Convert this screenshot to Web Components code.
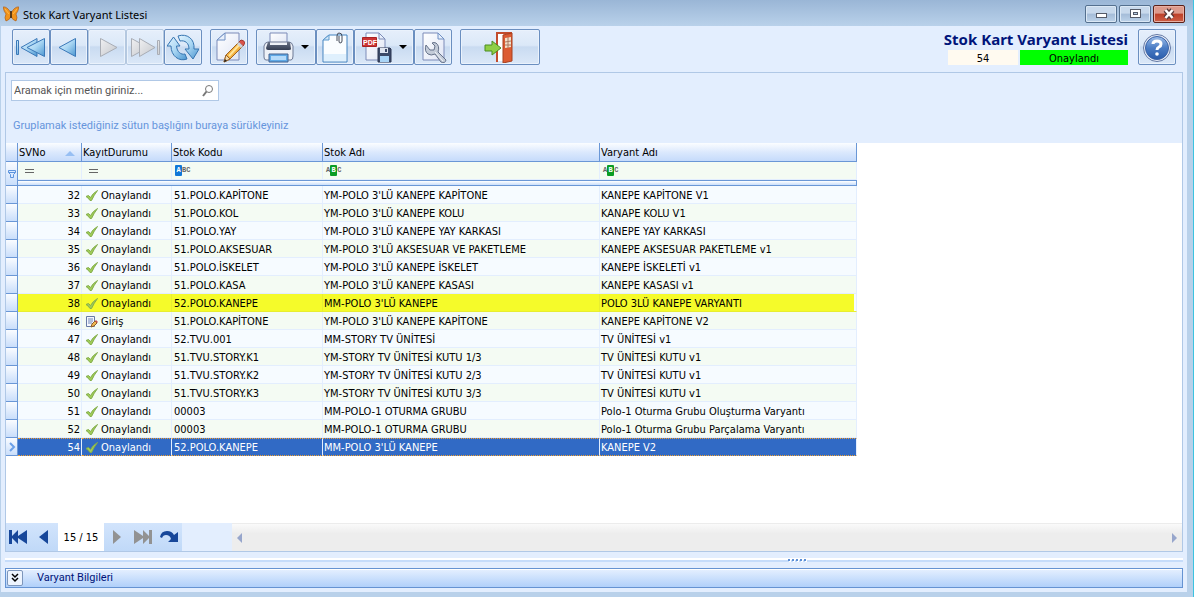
<!DOCTYPE html>
<html lang="tr">
<head>
<meta charset="utf-8">
<title>Stok Kart Varyant Listesi</title>
<style>
html,body{margin:0;height:100%}
body{font:11px/16px "DejaVu Sans Condensed","Noto Sans",sans-serif;color:#000;background:#b9d1ea;--soft:"Noto Sans","Open Sans",sans-serif;--slim:Roboto,"Liberation Sans",sans-serif}
</style>
</head>
<body>
<app-window caption="Stok Kart Varyant Listesi">
  <tool-bar slot="toolbar">
    <tool-button icon="first" label="İlk kayıt"></tool-button>
    <tool-button icon="prev" label="Önceki kayıt"></tool-button>
    <tool-button icon="next" label="Sonraki kayıt" disabled></tool-button>
    <tool-button icon="last" label="Son kayıt" disabled></tool-button>
    <tool-button icon="refresh" label="Yenile"></tool-button>
    <tool-button class="gap" icon="edit" label="Düzenle"></tool-button>
    <tool-button class="gap" icon="print" label="Yazdır" menu></tool-button>
    <tool-button icon="clip" label="Ekler"></tool-button>
    <tool-button icon="pdf" label="PDF olarak kaydet" menu></tool-button>
    <tool-button icon="wrench" label="Ayarlar"></tool-button>
    <tool-button class="gap" icon="exit" label="Çıkış" wide></tool-button>
    <record-status slot="end" heading="Stok Kart Varyant Listesi" number="54" state="Onaylandı"></record-status>
    <tool-button slot="end" icon="help" label="Yardım"></tool-button>
  </tool-bar>
  <list-panel>
    <search-box slot="search" hint="Aramak için metin giriniz..."></search-box>
    <span slot="group">Gruplamak istediğiniz sütun başlığını buraya sürükleyiniz</span>
    <variant-grid></variant-grid>
    <record-navigator slot="footer" position="15 / 15"></record-navigator>
  </list-panel>
  <split-bar></split-bar>
  <fold-panel>Varyant Bilgileri</fold-panel>
</app-window>
<script>
const gradients = `<defs>
<linearGradient id="b" x1="0" y1="0" x2="1" y2="1"><stop offset="0" stop-color="#e4f5ff"/><stop offset=".5" stop-color="#a9d6f3"/><stop offset="1" stop-color="#4a95d0"/></linearGradient>
<linearGradient id="g" x1="0" y1="0" x2="1" y2="1"><stop offset="0" stop-color="#f0f0f2"/><stop offset="1" stop-color="#c4c7cc"/></linearGradient>
<linearGradient id="p" x1="0" y1="0" x2="1" y2="1"><stop offset="0" stop-color="#fff"/><stop offset="1" stop-color="#dfe5f5"/></linearGradient>
<linearGradient id="d" x1="0" y1="0" x2="0" y2="1"><stop offset="0" stop-color="#6a7387"/><stop offset="1" stop-color="#343d52"/></linearGradient>
<linearGradient id="q" x1="0" y1="0" x2="0" y2="1"><stop offset="0" stop-color="#9fbfea"/><stop offset=".5" stop-color="#4a7cc4"/><stop offset="1" stop-color="#2a5cab"/></linearGradient>
</defs>`;
const page = `<path d="M12 2H26V29H4V9Z" fill="url(#p)" stroke="#7c8bb8"/><path d="M12 2V9H4Z" fill="#e8effa" stroke="#6f8fc4"/>`;
const pageR = `<path d="M6 2H21L27 8V29H6Z" fill="url(#p)" stroke="#7c8bb8"/><path d="M21 2V8H27Z" fill="#e8effa" stroke="#6f8fc4"/>`;
const icons = {
  first:[32,`<g stroke="#3a78b8" stroke-linejoin="round" fill="url(#b)"><path d="M1.500 9.500h2v14h-2z"/><path d="M22 7.500V25.500L6 16.500Z"/><path d="M29.500 7.500V25.500L12 16.500Z"/></g>`],
  prev:[32,`<path d="M22.500 7.500V25.500L6 16.500Z" fill="url(#b)" stroke="#3a78b8" stroke-linejoin="round"/>`],
  next:[32,`<path d="M9.500 7.500V25.500L26 16.500Z" fill="url(#g)" stroke="#a9adb5" stroke-linejoin="round"/>`],
  last:[32,`<g stroke="#a9adb5" stroke-linejoin="round" fill="url(#g)"><path d="M2.500 7.500V25.500L19 16.500Z"/><path d="M10.500 7.500V25.500L26 16.500Z"/><path d="M28.500 9.500h2v14h-2z"/></g>`],
  refresh:[32,`<g fill="url(#b)" stroke="#3574b0" stroke-linejoin="round"><path d="M0 15L6.500 6L13 15H9.500C10 21 14 24 18 23L20 28C12 31 4 25 4 15Z"/><path d="M32 18L26 28L18 18H22C22 12 18 9 13 10L11 5C20 2 28 8 27 18Z"/></g>`],
  edit:[32,`${page}<path d="M11 31L13 24L27 10L31 14L17 28Z" fill="#f3b13f" stroke="#9c6226"/><path d="M16 25L27 13" stroke="#ffe49a" stroke-width="2"/><path d="M26 11L28 9Q31 9 32 12L30 15Z" fill="#d9534a" stroke="#a23a34"/><path d="M24 13L26 11L30 15L28 17Z" fill="#cdd3dd"/><path d="M11 31L13 24L17 28Z" fill="#f3dcae" stroke="#9c6226"/><path d="M11 31L12 28L14 30Z" fill="#222"/>`],
  print:[32,`<path d="M8 14V2H25V14" fill="url(#p)" stroke="#7c8bb8"/><path d="M2 15Q3 11 6 11H27Q30 11 31 15V25Q31 29 29 29H4Q2 29 2 26Z" fill="#eef1f7" stroke="#6c7894"/><path d="M6 11H8V14H25V11H28L29 18Q29 19 27 19H6Q4 19 4 17Z" fill="url(#d)"/><path d="M7 23H26V31H7Z" fill="#5fa9e6" stroke="#47628f"/><path d="M9 25H24V29H9Z" fill="#b4dafa"/>`],
  clip:[32,`<path d="M10 4H28V31H4V9Z" fill="#fafdff" stroke="#4383c0"/><path d="M5 23H27V30H5Z" fill="#dff0fd"/><path d="M10 4V9H4Z" fill="#cfe5f8" stroke="#5d99cd"/><path d="M18 10V5Q18 2 20 2Q23 2 23 5V10Q23 12 21 12Q20 12 20 10V5" fill="none" stroke="#444a58"/>`],
  pdf:[32,`<path d="M6 2H19L25 8V29H6Z" fill="url(#p)" stroke="#7c8bb8"/><path d="M19 2V8H25Z" fill="#e8effa" stroke="#7c8bb8"/><path d="M2.500 6.500H16.500V15.500H2.500Z" fill="#cc3434" stroke="#a82222"/><text x="3" y="14" font-family="Liberation Sans" font-size="7" font-weight="bold" fill="#fff">PDF</text><path d="M18 17H30L31 18V31H18Z" fill="#3c4a68" stroke="#2a3550"/><path d="M20 17H28V22H20Z" fill="#dfe5f0"/><path d="M25 18H27V21H25Z" fill="#3c4a68"/><path d="M20 25H29V31H20Z" fill="#a9d4f6"/>`],
  wrench:[32,`${pageR}<path d="M9 14Q7 20 11 23Q14 25 18 23L24 31Q28 33 29 29L21 21Q23 15 19 12Q17 11 15 12L18 15L17 19L13 19Z" fill="#c3cbd8" stroke="#66728a" stroke-linejoin="round"/><path d="M18 21L26 30" stroke="#eef2f7"/>`],
  exit:[32,`<path d="M13 31V2H28" fill="none" stroke="#c24c2c" stroke-width="2"/><path d="M14 3H20V30H14Z" fill="#fff"/><path d="M19 4L28 2V30L19 32Z" fill="#dc5b32" stroke="#a8401f"/><path d="M21 7L27 6V16L21 17Z" fill="#f4dfc8"/><path d="M24 6V17M21 11L27 10M21 14H27" stroke="#a87860"/><path d="M1 14H8V10L17 17L8 24V20H1Z" fill="#8fce45" stroke="#4b8d21" stroke-linejoin="round"/>`],
  help:[32,`<circle cx="16" cy="17" r="13.500" fill="#e9eef8" stroke="#6378a3"/><circle cx="16" cy="17" r="11.500" fill="url(#q)" stroke="#3a62a6"/><path d="M12 13Q12 10 16 10Q20 10 20 13Q20 15 18 16Q16 17 16 19" fill="none" stroke="#fff" stroke-width="3"/><circle cx="16" cy="23" r="1.800" fill="#fff"/>`],
  check:[14,`<path d="M1 7.500L3.500 6.500L5.500 8.500Q8 4 12.500 1.500Q9 6 6.500 11.500H5Q3.500 9 1 7.500Z" fill="#9fcb57" stroke="#84ae4c" stroke-width="1"/>`],
  note:[14,`<path d="M1.500 1.500H9.500V11.500H1.500Z" fill="#f4f7fd" stroke="#6679a6"/><path d="M3 4H8M3 6H8M3 8H7" stroke="#6f86b8"/><path d="M6 12L7 9L10 6L12 8L9 11Z" fill="#f0b850" stroke="#8f5f2a"/><path d="M10 6L11 5L13 7L12 8Z" fill="#c9524a"/>`],
  funnel:[10,`<path d="M1.500 1.500H8.500V3.500L6.500 5.500V8.500H3.500V5.500L1.500 3.500ZM1.500 3.500H8.500" fill="#dcebff" stroke="#5e95dd"/>`],
  search:[14,`<circle cx="8" cy="5" r="3.500" fill="#fff" stroke="#777"/><path d="M5.500 7.500L2 12" stroke="#777" stroke-width="2"/>`],
  logo:[16,`<path d="M8 7Q4 0 0 1Q1 6 3 8Q1 12 3 15Q7 14 8 10Q9 14 13 15Q15 12 13 8Q15 6 16 1Q12 0 8 7Z" fill="#f0931c" stroke="#a85410" stroke-width=".6"/><path d="M8 5V12" stroke="#33200f" stroke-width="1.500"/><path d="M2 3L6 8M14 3L10 8" stroke="#ffb84a"/>`],
  nfirst:[20,`<path d="M1 3H4V9L10 3V9L19 3V17L10 11V17L4 11V17H1Z" fill="#17479a"/>`],
  nprev:[20,`<path d="M14 3V17L5 10Z" fill="#17479a"/>`],
  nnext:[20,`<path d="M6 3V17L14 10Z" fill="#929292"/>`],
  nlast:[20,`<path d="M19 3H16V9L10 3V9L1 3V17L10 11V17L16 11V17H19Z" fill="#929292"/>`],
  nredo:[20,`<path d="M1 10Q2 4 8 4Q13 4 15 8L19 5V15H9L12 12Q11 8 7 8Q4 8 3 11Z" fill="#17479a"/>`],
  chev:[10,`<path d="M2 1L5 4L8 1M2 5L5 8L8 5" fill="none" stroke="#000" stroke-width="1.500"/>`],
  row:[10,`<path d="M3 1L7 5L3 9" fill="none" stroke="#6ba0e8" stroke-width="2"/>`]
};
const svg = (name, size) => {
  const [box, body] = icons[name];
  return `<svg viewBox="0 0 ${box} ${box}" width="${size||box}" height="${size||box}" aria-hidden="true">${gradients}${body}</svg>`;
};
class Base extends HTMLElement{
  constructor(){super();this.attachShadow({mode:'open'});}
  connectedCallback(){this.shadowRoot.innerHTML=`<style>*{box-sizing:border-box}button{font:inherit;color:inherit;margin:0}svg{display:block;flex:none}${this.css()}</style>${this.html()}`;}
  at(n){return this.getAttribute(n)||'';}
}
customElements.define('app-window', class extends Base{
  css(){return `
  :host{display:flex;flex-direction:column;min-height:100vh;box-sizing:border-box;padding:0 6px 5px 1px;background:#b9d1ea;border-right:1px solid #3cc3e0}
  header{display:flex;align-items:center;height:26px;margin:0 -6px 0 -1px;padding:0 8px 0 3px;background:linear-gradient(#9ab6d6,#b9d1ea);font:11px/16px var(--soft)}
  h1{margin:4px auto 0 4px;font:inherit}
  svg{margin-top:2px}
  .box{display:flex;gap:2px;margin-top:2px}
  .box button{display:grid;place-items:center;width:32px;height:18px;padding:0;border:1px solid #54708f;border-radius:2px;background:linear-gradient(#c8d9ec 45%,#a4bcd8 50%,#bdd3ea);box-shadow:inset 0 0 0 1px #dbe8f5}
  .box svg{margin:0}
  .box .x{border-color:#5b2018;background:linear-gradient(#dd9a8c 45%,#bd4029 50%,#cf5f46);box-shadow:inset 0 0 0 1px #e8b0a4}
  main{flex:1;display:flex;flex-direction:column;background:#e3eefe;padding:2px 4px 4px}`;}
  html(){return `<header>${svg('logo')}<h1>${this.at('caption')}</h1><div class="box">
  <button aria-label="Simge durumuna küçült"><svg width="16" height="12"><rect x="3.500" y="5.500" width="10" height="4" fill="#fff" stroke="#555b68"/></svg></button>
  <button aria-label="Ekranı kapla"><svg width="16" height="12"><rect x="3.500" y="1.500" width="10" height="8" fill="#fff" stroke="#555b68"/><rect x="6.500" y="4.500" width="4" height="2" fill="#b9cfe6" stroke="#555b68"/></svg></button>
  <button class="x" aria-label="Kapat"><svg width="16" height="12"><path d="M4.500 2L11.500 10M11.500 2L4.500 10" stroke="#5c3a3a" stroke-width="5"/><path d="M4.500 2L11.500 10M11.500 2L4.500 10" stroke="#fff" stroke-width="2.500"/></svg></button></div></header>
  <main><slot name="toolbar"></slot><slot></slot></main>`;}
});
customElements.define('tool-bar', class extends Base{
  css(){return `:host{display:flex;height:44px;padding:1px 7px 0;box-sizing:border-box;align-items:flex-start}
  .end{display:flex;gap:10px;margin-left:auto}
  ::slotted(.gap){margin-left:8px}`;}
  html(){return `<slot></slot><div class="end"><slot name="end"></slot></div>`;}
});
customElements.define('tool-button', class extends Base{
  css(){return `:host{display:block;flex:none}
  button{display:flex;align-items:center;justify-content:center;gap:7px;width:38px;height:36px;padding:0;border:1px solid #6b8fc0;border-radius:2px;background:linear-gradient(#e6effb,#dbe8f8 45%,#c9dbf1 50%,#dbe8f8);box-shadow:inset 0 0 0 1px #eaf2fc}
  button:disabled{border-color:#b4c8e0}
  :host([menu]) button{width:60px;justify-content:flex-start;padding-left:5px}
  :host([wide]) button{width:80px}
  i{border:4px solid transparent;border-top-color:#000;border-bottom:0}`;}
  html(){return `<button aria-label="${this.at('label')}" ${this.hasAttribute('disabled')?'disabled':''}>${svg(this.at('icon'))}${this.hasAttribute('menu')?'<i></i>':''}</button>`;}
});
customElements.define('record-status', class extends Base{
  css(){return `:host{display:block;width:192px;text-align:right}
  h2{margin:0;font:bold 15px/20px var(--soft);color:#00147a;white-space:nowrap;display:flex;justify-content:flex-end}
  div{display:flex;gap:2px;justify-content:flex-end;text-align:center;line-height:17px;margin-top:1px}
  span{width:70px;height:15px;background:#fffaf0}b{font-weight:400;width:108px;height:15px;background:#0f0}`;}
  html(){return `<h2>${this.at('heading')}</h2><div><span>${this.at('number')}</span><b>${this.at('state')}</b></div>`;}
});
customElements.define('list-panel', class extends Base{
  css(){return `:host{flex:1;display:flex;flex-direction:column;border:1px solid #b0c8e6;min-height:0}
  .top{padding:7px 5px 0}
  .group{padding:16px 2px 8px;font-family:var(--slim);line-height:18px;color:#6695dc}
  .body{flex:1;background:#fff}`;}
  html(){return `<div class="top"><slot name="search"></slot><div class="group"><slot name="group"></slot></div></div><div class="body"><slot></slot></div><slot name="footer"></slot>`;}
});
customElements.define('search-box', class extends Base{
  css(){return `:host{display:block;width:208px}
  label{display:flex;align-items:center;height:21px;border:1px solid #b0c8e6;background:#fff;padding-right:3px}
  input{flex:1;min-width:0;border:0;outline:0;padding:0 2px;font:11px/16px var(--slim);background:none}
  input::placeholder{color:#555;opacity:1}`;}
  html(){return `<label><input type="search" aria-label="Arama" placeholder="${this.at('hint')}">${svg('search')}</label>`;}
});
const rows=[
[32,'Onaylandı','51.POLO.KAPİTONE',"YM-POLO 3'LÜ KANEPE KAPİTONE",'KANEPE KAPİTONE V1'],
[33,'Onaylandı','51.POLO.KOL',"YM-POLO 3'LÜ KANEPE KOLU",'KANAPE KOLU V1'],
[34,'Onaylandı','51.POLO.YAY',"YM-POLO 3'LÜ KANEPE YAY KARKASI",'KANEPE YAY KARKASI'],
[35,'Onaylandı','51.POLO.AKSESUAR',"YM-POLO 3'LÜ AKSESUAR VE PAKETLEME",'KANEPE AKSESUAR PAKETLEME v1'],
[36,'Onaylandı','51.POLO.İSKELET',"YM-POLO 3'LÜ KANEPE İSKELET",'KANEPE İSKELETİ v1'],
[37,'Onaylandı','51.POLO.KASA',"YM-POLO 3'LÜ KANEPE KASASI",'KANEPE KASASI v1'],
[38,'Onaylandı','52.POLO.KANEPE',"MM-POLO 3'LÜ KANEPE",'POLO 3LÜ KANEPE VARYANTI','hot'],
[46,'Giriş','51.POLO.KAPİTONE',"YM-POLO 3'LÜ KANEPE KAPİTONE",'KANEPE KAPİTONE V2'],
[47,'Onaylandı','52.TVU.001','MM-STORY TV ÜNİTESİ','TV ÜNİTESİ v1'],
[48,'Onaylandı','51.TVU.STORY.K1','YM-STORY TV ÜNİTESİ KUTU 1/3','TV ÜNİTESİ KUTU v1'],
[49,'Onaylandı','51.TVU.STORY.K2','YM-STORY TV ÜNİTESİ KUTU 2/3','TV ÜNİTESİ KUTU v1'],
[50,'Onaylandı','51.TVU.STORY.K3','YM-STORY TV ÜNİTESİ KUTU 3/3','TV ÜNİTESİ KUTU v1'],
[51,'Onaylandı','00003','MM-POLO-1 OTURMA GRUBU','Polo-1 Oturma Grubu Oluşturma Varyantı'],
[52,'Onaylandı','00003','MM-POLO-1 OTURMA GRUBU','Polo-1 Oturma Grubu Parçalama Varyantı'],
[54,'Onaylandı','52.POLO.KANEPE',"MM-POLO 3'LÜ KANEPE",'KANEPE V2','sel']];
customElements.define('status-cell', class extends Base{
  css(){return `:host{display:flex;align-items:center;gap:2px;height:15px}`;}
  html(){return `${svg(this.at('icon'))}<slot></slot>`;}
});
customElements.define('match-icon', class extends Base{
  css(){return `:host{display:flex;align-items:center;font:bold 7px/11px "Liberation Mono",monospace;color:#666;padding-left:2px;height:17px}
  span{min-width:4px;text-align:center}.on{width:7px;height:11px;color:#fff;background:${this.at('color')};border-radius:1px}`;}
  html(){return [...'ABC'].map(c=>`<span class="${c===this.at('active')?'on':''}">${c}</span>`).join('');}
});
customElements.define('variant-grid', class extends Base{
  css(){return `:host{display:block}
  table{table-layout:fixed;width:851px;border-collapse:separate;border-spacing:0}
  th,td{padding:0 1px;height:18px;line-height:17px;text-align:left;font-weight:400;white-space:nowrap;overflow:hidden;border:solid #e3eefe;border-width:0 1px 1px 0}
  td{padding-top:2px;line-height:15px}
  thead th{height:19px;padding-top:2px;line-height:16px;border-color:#6a97d6;background:linear-gradient(#fbfdff,#dce9fd 50%,#c5dbfb)}
  thead th>div{display:flex;align-items:center;justify-content:space-between;padding-right:5px}
  thead i{border:5px solid transparent;border-bottom-color:#97bff3;border-top:0}
  tbody th{border-color:#6a97d6;background:linear-gradient(#fafcff,#c9defb);padding:0}
  tbody th svg{margin:auto}
  .filter td,.even td{background:#f4fbf3}
  .filter td{padding-top:0}
  .odd td{background:#f6fbff}
  td.eq{color:#666;padding-left:7px}
  .sep td{height:6px;padding:0;line-height:0;border:1px solid #6a97d6;border-left:0;background:linear-gradient(#fff,#c9defb)}
  .n{text-align:right}
  td.t{padding-left:2px}
  td.s{padding-left:3px}
  .hot td{background:#f5fb2a;border-color:#e8ee30}
  .hot td:last-child{background:linear-gradient(90deg,#f5fb2a 254px,#f6fbff 254px);border-right-color:#e3eefe}
  .sel td{background:#316ac5;color:#fff;border-bottom:1px dotted #f0a030;border-top:1px dotted #f0a030;padding-top:1px}`;}
  html(){
    const eq='<svg width="10" height="17"><path d="M0 7.500H9M0 10.500H9" stroke="#666"/></svg>';
    return `<table><colgroup><col style="width:12px"><col style="width:64px"><col style="width:90px"><col style="width:151px"><col style="width:277px"><col style="width:257px"></colgroup>
    <thead><tr><th></th><th scope="col"><div>SVNo<i></i></div></th><th scope="col">KayıtDurumu</th><th scope="col">Stok Kodu</th><th scope="col">Stok Adı</th><th scope="col">Varyant Adı</th></tr></thead>
    <tbody><tr class="filter"><th rowspan="2">${svg('funnel')}</th><td class="eq">${eq}</td><td class="eq">${eq}</td>
    <td><match-icon active="A" color="#1177d7"></match-icon></td><td><match-icon active="B" color="#0a9d24"></match-icon></td><td><match-icon active="B" color="#0a9d24"></match-icon></td></tr>
    <tr class="sep"><td colspan="5"></td></tr>
    ${rows.map((r,i)=>`<tr class="${i%2?'even':'odd'} ${r[5]||''}"><th>${r[5]==='sel'?svg('row'):''}</th><td class="n">${r[0]}</td><td class="s"><status-cell icon="${r[1]==='Giriş'?'note':'check'}">${r[1]}</status-cell></td><td class="t">${r[2]}</td><td>${r[3]}</td><td>${r[4]}</td></tr>`).join('')}
    </tbody></table>`;}
});
customElements.define('record-navigator', class extends Base{
  css(){return `:host{display:flex;height:28px;background:#e3eefe}
  .g{display:flex;align-items:center;gap:6px;width:52px;padding:0 2px;background:linear-gradient(#d2e4fc,#c0d9f8)}
  .g.r{width:78px;padding:0 3px}
  .g button{border:0;padding:0;background:none;width:20px;height:26px;display:grid;place-items:center}
  output{width:46px;background:#fff;text-align:center;line-height:29px}
  .bar{flex:1;display:flex;justify-content:space-between;align-items:center;margin-left:50px;padding:0 5px;background:linear-gradient(#fafafa,#ededed 35%);border-top:1px solid #ececec}
  .bar button{border:5px solid transparent;padding:0;background:none;width:0;height:0}
  .bar .l{border-right-color:#97a6cc;border-left:0}.bar .rr{border-left-color:#97a6cc;border-right:0}`;}
  html(){const b=(i,l)=>`<button aria-label="${l}">${svg(i)}</button>`;
  return `<div class="g">${b('nfirst','İlk')}${b('nprev','Önceki')}</div><output>${this.at('position')}</output><div class="g r">${b('nnext','Sonraki')}${b('nlast','Son')}${b('nredo','Yinele')}</div>
  <div class="bar"><button class="l" aria-label="Sola kaydır"></button><button class="rr" aria-label="Sağa kaydır"></button></div>`;}
});
customElements.define('split-bar', class extends Base{
  css(){return `:host{display:flex;justify-content:center;align-items:flex-start;height:16px;padding-top:6px;box-sizing:border-box}
  div{width:100%;height:4px;display:flex;justify-content:center;background:linear-gradient(#fff 50%,#c5dcfa 50%);}
  svg{margin-left:408px}`;}
  html(){return `<div><svg width="20" height="4">${[0,4,8,12,16].map(x=>`<path d="M${x+1} 2h2v2h-2z" fill="#fff"/><path d="M${x} 1h2v2h-2z" fill="#5b8fd6"/>`).join('')}</svg></div>`;}
});
customElements.define('fold-panel', class extends Base{
  css(){return `:host{display:flex;align-items:center;gap:14px;height:20px;box-sizing:border-box;border:1px solid #6593d2;background:linear-gradient(#e6f0ff,#b0d0fa);color:#00147a;box-shadow:inset 0 1px #fff;font-family:var(--slim)}
  button{display:grid;place-items:center;width:16px;height:16px;margin-left:1px;padding:0;border:1px solid #7d96bb;border-radius:2px;background:#edf4fe}`;}
  html(){return `<button aria-label="Genişlet">${svg('chev')}</button><slot></slot>`;}
});
</script>
</body>
</html>
